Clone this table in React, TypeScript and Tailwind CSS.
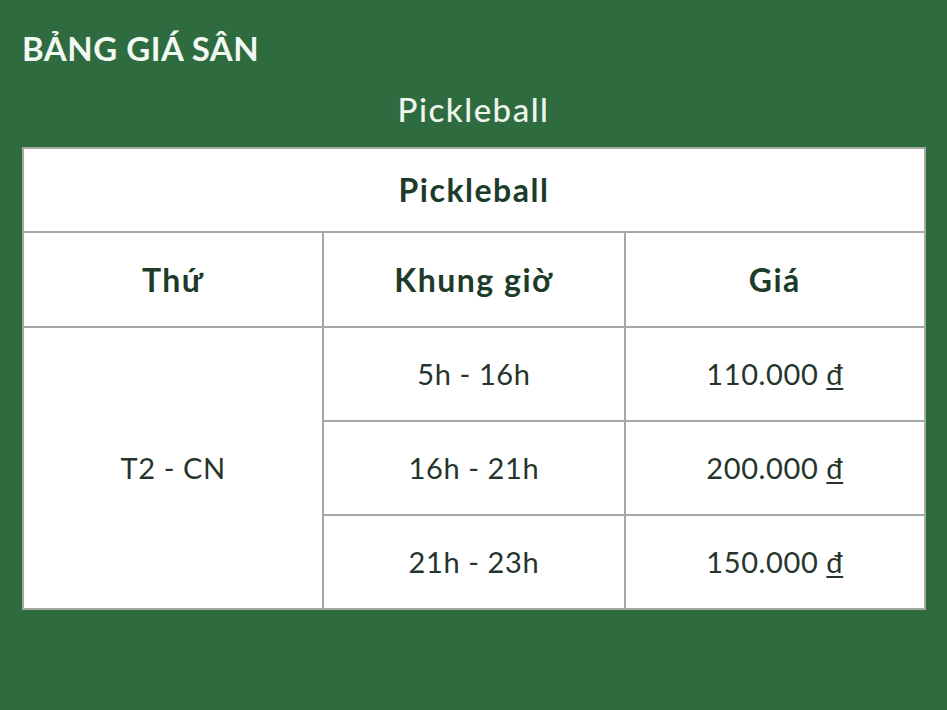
export default function App() {
  const rows = [
    { time: "5h - 16h", price: "110.000" },
    { time: "16h - 21h", price: "200.000" },
    { time: "21h - 23h", price: "150.000" },
  ];

  return (
    <div
      className="min-h-[710px] w-full bg-[#2e6b3f] px-[22px] pt-[28px]"
      style={{ fontFamily: "Lato, 'Open Sans', sans-serif" }}
    >
      <h1 className="text-[33px] font-bold leading-[40px] tracking-[0.5px] text-[#f2f8f2]">
        BẢNG GIÁ SÂN
      </h1>
      <h2 className="mt-[21px] text-center text-[33px] font-medium leading-[40px] tracking-[1.5px] text-[#eef6ee]">
        Pickleball
      </h2>
      <table className="mt-[18px] w-[904px] border-collapse bg-white text-center">
        <thead>
          <tr>
            <th
              colSpan={3}
              className="h-[84px] border-2 border-[#a4a9a6] text-[32px] font-bold tracking-[1.5px] text-[#1d3b2a]"
            >
              Pickleball
            </th>
          </tr>
          <tr className="text-[32px] font-bold tracking-[1.5px] text-[#1d3b2a]">
            <th className="h-[95px] w-[301px] border-2 border-[#a4a9a6]">Thứ</th>
            <th className="h-[95px] w-[302px] border-2 border-[#a4a9a6]">Khung giờ</th>
            <th className="h-[95px] w-[301px] border-2 border-[#a4a9a6]">Giá</th>
          </tr>
        </thead>
        <tbody className="text-[29px] tracking-[0.6px] text-[#26352c]">
          {rows.map((r, i) => (
            <tr key={r.time}>
              {i === 0 && (
                <td rowSpan={3} className="border-2 border-[#a4a9a6]">
                  T2 - CN
                </td>
              )}
              <td className="h-[94px] border-2 border-[#a4a9a6]">{r.time}</td>
              <td className="h-[94px] border-2 border-[#a4a9a6]">
                {r.price} <span className="underline underline-offset-[3px]">đ</span>
              </td>
            </tr>
          ))}
        </tbody>
      </table>
    </div>
  );
}
